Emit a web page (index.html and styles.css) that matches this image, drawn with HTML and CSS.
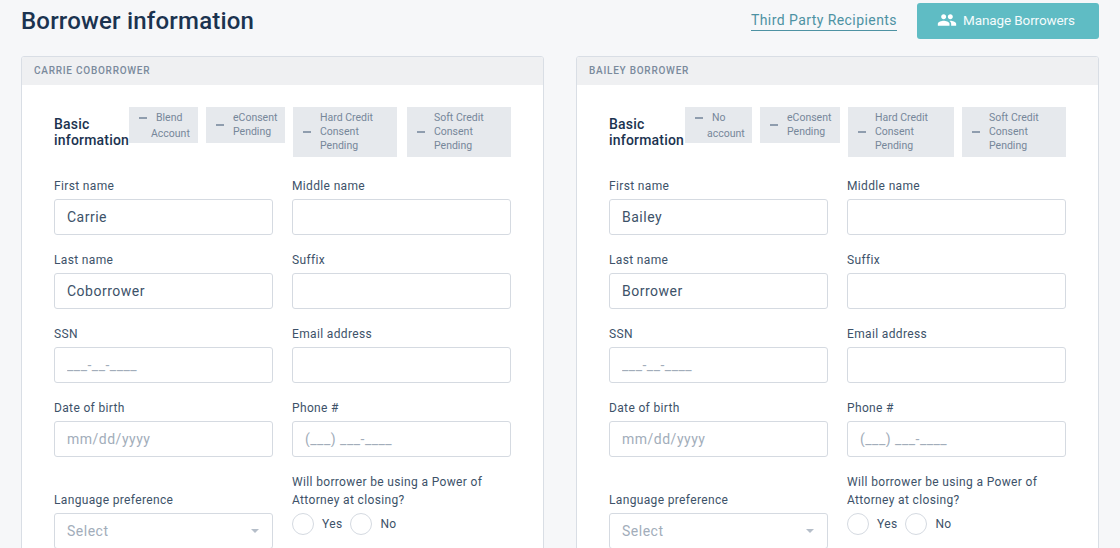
FILE: index.html
```html
<!DOCTYPE html>
<html lang="en">
<head>
<meta charset="utf-8">
<title>Borrower information</title>
<link rel="stylesheet" href="styles.css">
</head>
<body>
<main class="page">
  <header class="topbar">
    <h1 class="title">Borrower information</h1>
    <div class="actions">
      <a class="link" href="#">Third Party Recipients</a>
      <button class="btn" type="button">
        <svg class="btn-icon" viewBox="0 0 24 24" aria-hidden="true"><path d="M16 11c1.66 0 2.99-1.34 2.99-3S17.66 5 16 5c-1.66 0-3 1.34-3 3s1.34 3 3 3zm-8 0c1.66 0 2.99-1.34 2.99-3S9.66 5 8 5C6.34 5 5 6.34 5 8s1.34 3 3 3zm0 2c-2.33 0-7 1.17-7 3.5V19h14v-2.5c0-2.33-4.67-3.5-7-3.5zm8 0c-.29 0-.62.02-.97.05 1.16.84 1.97 1.97 1.97 3.45V19h6v-2.5c0-2.33-4.67-3.5-7-3.5z"/></svg>
        Manage Borrowers
      </button>
    </div>
  </header>
  <div class="cards">
    <section class="card">
      <div class="card-head">CARRIE COBORROWER</div>
      <div class="card-body">
        <div class="status-row">
          <h2 class="section-title">Basic information</h2>
          <div class="pills">
            <div class="pill pill-account pill-w69"><span class="dash"></span><span class="pill-text">Blend<br>Account</span></div>
            <div class="pill pill-w79"><span class="dash"></span><span>eConsent<br>Pending</span></div>
            <div class="pill pill-w104 pill-gap"><span class="dash"></span><span>Hard Credit<br>Consent<br>Pending</span></div>
            <div class="pill pill-w104"><span class="dash"></span><span>Soft Credit<br>Consent<br>Pending</span></div>
          </div>
        </div>
        <form class="form">
          <div class="field"><label class="label">First name</label><input class="input" value="Carrie"></div>
          <div class="field"><label class="label">Middle name</label><input class="input"></div>
          <div class="field"><label class="label">Last name</label><input class="input" value="Coborrower"></div>
          <div class="field"><label class="label">Suffix</label><input class="input"></div>
          <div class="field"><label class="label">SSN</label><input class="input" placeholder="___-__-____"></div>
          <div class="field"><label class="label">Email address</label><input class="input"></div>
          <div class="field"><label class="label">Date of birth</label><input class="input" placeholder="mm/dd/yyyy"></div>
          <div class="field"><label class="label">Phone #</label><input class="input" placeholder="(___) ___-____"></div>
          <div class="field field-end"><label class="label">Language preference</label><div class="select">Select<span class="caret"></span></div></div>
          <div class="field field-tall"><label class="label label-long">Will borrower be using a Power of Attorney at closing?</label>
            <div class="radios"><span class="radio"></span><span class="radio-text">Yes</span><span class="radio"></span><span class="radio-text">No</span></div>
          </div>
        </form>
      </div>
    </section>
    <section class="card">
      <div class="card-head">BAILEY BORROWER</div>
      <div class="card-body">
        <div class="status-row">
          <h2 class="section-title section-title-wide">Basic information</h2>
          <div class="pills">
            <div class="pill pill-account pill-w67"><span class="dash"></span><span class="pill-text">No<br>account</span></div>
            <div class="pill pill-w80"><span class="dash"></span><span>eConsent<br>Pending</span></div>
            <div class="pill pill-w106"><span class="dash"></span><span>Hard Credit<br>Consent<br>Pending</span></div>
            <div class="pill pill-w104"><span class="dash"></span><span>Soft Credit<br>Consent<br>Pending</span></div>
          </div>
        </div>
        <form class="form">
          <div class="field"><label class="label">First name</label><input class="input" value="Bailey"></div>
          <div class="field"><label class="label">Middle name</label><input class="input"></div>
          <div class="field"><label class="label">Last name</label><input class="input" value="Borrower"></div>
          <div class="field"><label class="label">Suffix</label><input class="input"></div>
          <div class="field"><label class="label">SSN</label><input class="input" placeholder="___-__-____"></div>
          <div class="field"><label class="label">Email address</label><input class="input"></div>
          <div class="field"><label class="label">Date of birth</label><input class="input" placeholder="mm/dd/yyyy"></div>
          <div class="field"><label class="label">Phone #</label><input class="input" placeholder="(___) ___-____"></div>
          <div class="field field-end"><label class="label">Language preference</label><div class="select">Select<span class="caret"></span></div></div>
          <div class="field field-tall"><label class="label label-long">Will borrower be using a Power of Attorney at closing?</label>
            <div class="radios"><span class="radio"></span><span class="radio-text">Yes</span><span class="radio"></span><span class="radio-text">No</span></div>
          </div>
        </form>
      </div>
    </section>
  </div>
</main>
</body>
</html>
```
FILE: styles.css
```css
* { box-sizing: border-box; }
html, body { margin: 0; height: 548px; overflow: hidden; }
body { background: #f6f7f9; font-family: Roboto, "Liberation Sans", sans-serif; color: #1b3350; }
.page { padding: 3px 21px 0; }
.topbar { display: flex; justify-content: space-between; align-items: center; height: 36px; margin-bottom: 17px; }
.title { margin: 0; font-size: 24px; line-height: 36px; font-weight: 500; letter-spacing: 0.2px; color: #1b3350; }
.actions { display: flex; align-items: center; gap: 20px; }
.link { font-size: 14px; line-height: 18px; letter-spacing: 0.43px; color: #4d92a3; text-decoration: none; border-bottom: 1px solid #4d92a3; padding-bottom: 1px; }
.btn { display: flex; align-items: center; justify-content: flex-start; gap: 6px; width: 182px; height: 36px; border: 0; border-radius: 3px; background: #5fbcc4; color: #f4fbfc; font: 400 13.5px Roboto, sans-serif; letter-spacing: -0.11px; padding: 0 0 2px 20px; }
.btn-icon { width: 20px; height: 20px; fill: #fff; }
.cards { display: grid; grid-template-columns: 1fr 1fr; gap: 32px; }
.card { border: 1px solid #d9dee5; border-radius: 3px; background: #fff; height: 600px; overflow: hidden; }
.card-head { height: 28px; background: #eff0f2; padding: 0 12px; font-size: 10px; line-height: 27px; font-weight: 500; letter-spacing: 0.75px; color: #7a8a9c; }
.card-body { padding: 22px 32px 0; }
.status-row { display: flex; align-items: flex-start; min-height: 50px; margin-bottom: 22px; }
.section-title { margin: 9px 0 0; width: 75px; flex: none; font-size: 14px; line-height: 16px; font-weight: 500; letter-spacing: 0.2px; color: #1b3350; }
.section-title-wide { width: 76px; }
.pills { display: flex; align-items: flex-start; gap: 8px; }
.pill { display: flex; align-items: center; flex: none; gap: 9px; padding: 4px 0 4px 10px; background: #e6e9ed; font-size: 10.5px; line-height: 14px; letter-spacing: 0; color: #76879a; }
.pill-account { align-items: flex-start; padding: 3px 0 1px 10px; line-height: 16px; gap: 4px; }
.pill-account .dash { margin-top: 7px; }
.pill-text { text-indent: 5px; }
.pill-gap { margin-right: 2px; }
.pill-w67 { width: 67px; }
.pill-w69 { width: 69px; }
.pill-w79 { width: 79px; }
.pill-w80 { width: 80px; }
.pill-w104 { width: 104px; }
.pill-w106 { width: 106px; }
.dash { flex: none; width: 8px; height: 1.5px; background: #8f9dae; }
.form { display: grid; grid-template-columns: 219px 219px; column-gap: 19px; row-gap: 18px; }
.field { display: flex; flex-direction: column; min-width: 0; }
.field-end { justify-content: flex-end; }
.field-tall { margin-top: -2px; }
.label { font-size: 12px; line-height: 14px; letter-spacing: 0.35px; color: #3d5269; margin-bottom: 6px; }
.label-long { line-height: 18px; margin-bottom: 4px; }
.input, .select { width: 100%; height: 36px; border: 1px solid #d5dae1; border-radius: 3px; background: #fff; padding: 0 12px; font: 400 14px/34px Roboto, sans-serif; letter-spacing: 0.5px; color: #3d5269; outline: 0; }
.input::placeholder { color: #a2adba; opacity: 1; }
.select { position: relative; color: #a2adba; }
.caret { position: absolute; right: 13px; top: 15px; border: 4px solid transparent; border-top-color: #b5bec9; border-bottom: 0; }
.radios { display: flex; align-items: flex-start; height: 36px; font-size: 12px; line-height: 22px; letter-spacing: 0.35px; color: #3d5269; }
.radio { width: 22px; height: 22px; border: 1px solid #d5dae1; border-radius: 50%; background: #fff; margin-right: 8px; }
.radio-text { margin-right: 8px; }
```
